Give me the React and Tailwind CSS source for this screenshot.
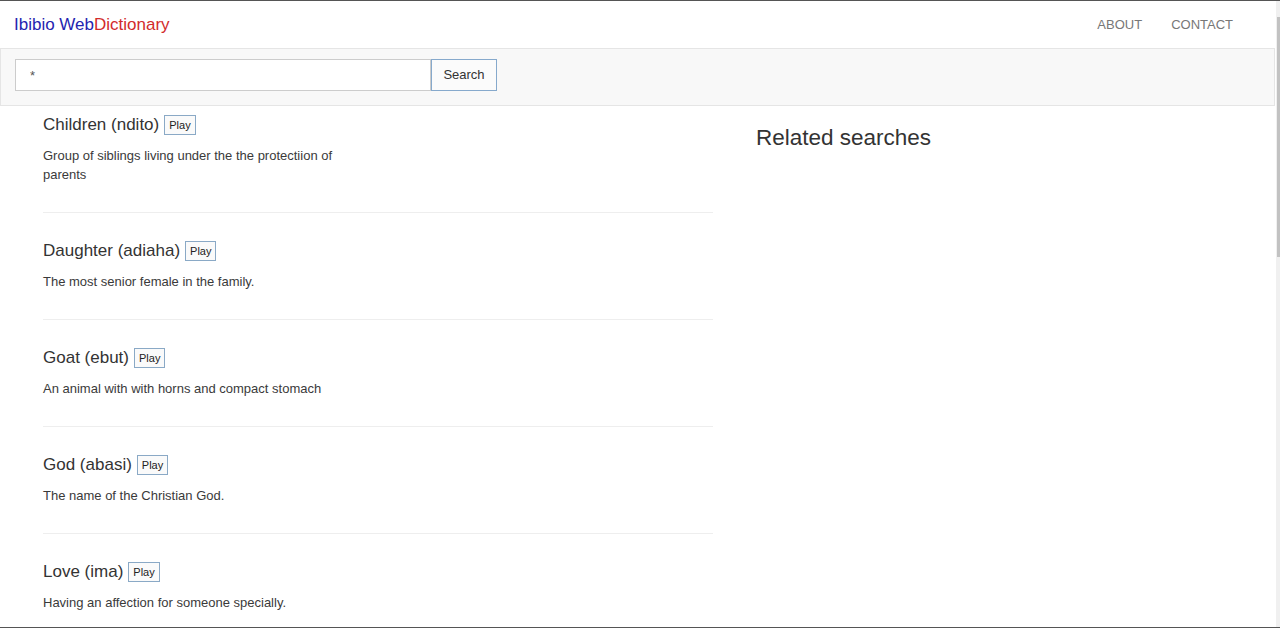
const entries = [
  {
    word: 'Children',
    ibibio: 'ndito',
    meaning: 'Group of siblings living under the the protectiion of parents',
  },
  { word: 'Daughter', ibibio: 'adiaha', meaning: 'The most senior female in the family.' },
  { word: 'Goat', ibibio: 'ebut', meaning: 'An animal with with horns and compact stomach' },
  { word: 'God', ibibio: 'abasi', meaning: 'The name of the Christian God.' },
  { word: 'Love', ibibio: 'ima', meaning: 'Having an affection for someone specially.' },
]

const ResultItem = ({ item }) => {
  return (
    <div>
      <div className="flex items-center h-[22px]">
        <h4 className="text-[17px] leading-[22px] text-[#333]">
          {item.word} ({item.ibibio})
        </h4>
        <button className="ml-[5px] h-[20px] px-[4px] text-[11px] leading-[18px] text-[#222] bg-[#fafafa] border border-[#8aa9c6]">
          Play
        </button>
      </div>
      <p className="mt-[10px] w-[320px] text-[13px] leading-[19px] text-[#3a3a3a]">{item.meaning}</p>
      <div className="mt-[28px] mb-[27px] h-px bg-[#eeeeee]" />
    </div>
  )
}

const App = () => {
  return (
    <div
      className="h-[628px] overflow-hidden flex bg-white border-t border-b border-[#555]"
      style={{ fontFamily: '"Liberation Sans", Arial, sans-serif' }}
    >
      <div className="w-[1276px] flex flex-col">
        <nav className="shrink-0 h-[47px] flex items-center justify-between pl-[14px] pr-[43px]">
          <a className="text-[17px] leading-none">
            <span className="text-[#2424b0]">Ibibio Web</span>
            <span className="text-[#d22c2c]">Dictionary</span>
          </a>
          <div className="flex items-center gap-[29px] text-[13px] text-[#777]">
            <a>ABOUT</a>
            <a>CONTACT</a>
          </div>
        </nav>

        <div className="shrink-0 h-[58px] bg-[#f8f8f8] border border-[#e5e5e5] mr-px pt-[10px] pl-[14px]">
          <div className="flex">
            <input
              defaultValue="*"
              className="w-[416px] h-[32px] px-[14px] text-[13px] text-[#555] bg-white border border-[#cccccc] outline-none"
            />
            <button className="w-[66px] h-[32px] text-[13px] text-[#333] bg-[#fbfbfb] border border-[#86a9cc]">
              Search
            </button>
          </div>
        </div>

        <div className="shrink-0 flex pt-[8px]">
          <div className="ml-[43px] w-[670px]">
            {entries.map((item) => (
              <ResultItem key={item.word} item={item} />
            ))}
          </div>
          <div className="ml-[43px] pt-[11px]">
            <h3 className="text-[22.5px] leading-[26px] text-[#333]">Related searches</h3>
          </div>
        </div>
      </div>
      <div className="shrink-0 w-[4px] bg-[#f0f0f0] pt-[16px]">
        <div className="h-[240px] w-[3px] ml-px bg-[#c2c2c2]" />
      </div>
    </div>
  )
}

export default App
